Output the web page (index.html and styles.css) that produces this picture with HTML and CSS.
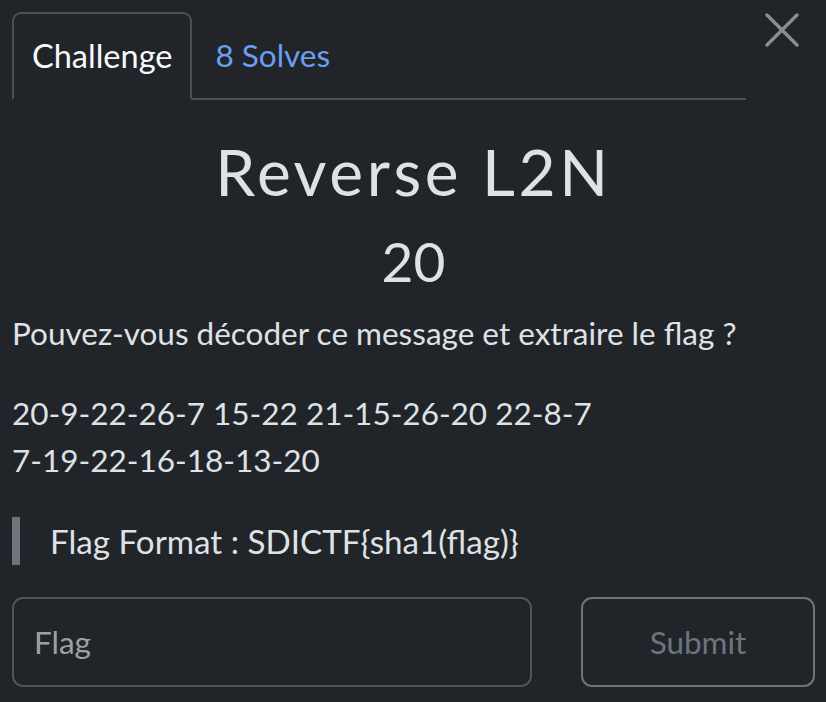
FILE: index.html
```html
<!DOCTYPE html>
<html lang="fr">
<head>
<meta charset="utf-8">
<title>Reverse L2N</title>
<link rel="stylesheet" href="styles.css">
</head>
<body>
<div class="modal">
  <div class="header">
    <ul class="tabs">
      <li class="tab active">Challenge</li>
      <li class="tab link">8 Solves</li>
    </ul>
    <button class="close" aria-label="Close">
      <svg width="34" height="34" viewBox="0 0 34 34"><path d="M2 2L32 32M32 2L2 32" stroke="#8b8d90" stroke-width="3.4" stroke-linecap="round"/></svg>
    </button>
  </div>
  <h3 class="title">Reverse L2N</h3>
  <h4 class="points">20</h4>
  <div class="desc">
    <p>Pouvez-vous décoder ce message et extraire le flag ?</p>
    <p>20-9-22-26-7 15-22 21-15-26-20 22-8-7<br>7-19-22-16-18-13-20</p>
    <blockquote>Flag Format : SDICTF{sha1(flag)}</blockquote>
  </div>
  <div class="form">
    <input class="flag" type="text" placeholder="Flag">
    <button class="submit">Submit</button>
  </div>
</div>
</body>
</html>
```
FILE: styles.css
```css
* { box-sizing: border-box; }
html, body { margin: 0; padding: 0; background: #212529; }
body {
  font-family: Lato, "Noto Sans", sans-serif;
  color: #dee2e6;
  font-size: 31.5px;
}
.modal { padding: 12px 11px 0 12px; }
.header { display: flex; align-items: flex-start; }
.tabs {
  list-style: none; margin: 0; padding: 0;
  display: flex; width: 734px; height: 88px;
  border-bottom: 2px solid #4b5057;
}
.tab {
  height: 88px; margin-bottom: -2px;
  padding: 0 18px 1px;
  border: 2px solid transparent;
  line-height: 83px;
  font-size: 32.5px;
}
.tab.active {
  color: #f8f9fa;
  border-color: #4b5057 #4b5057 #212529;
  border-radius: 9px 9px 0 0;
}
.tab.link { color: #6c9ef2; padding-left: 21px; font-size: 31.5px; }
.close {
  margin-left: auto; margin-top: 1px; margin-right: 16px;
  background: none; border: 0; padding: 0; width: 34px; height: 34px;
}
.close svg { display: block; }
.title {
  margin: 27px 0 0; text-align: center;
  font-size: 64px; font-weight: 400; letter-spacing: 3.6px;
  line-height: 90px; color: #dee2e6;
}
.points {
  margin: 0; text-align: center; font-size: 55px; font-weight: 400;
  line-height: 88px; color: #dee2e6;
}
.desc { margin-top: 4.5px; }
.desc p { margin: 0 0 34px; line-height: 46.5px; }
blockquote {
  margin: 0; padding-left: 30px; border-left: 8px solid #6c757d;
  line-height: 48px; font-size: 33.2px;
}
.form { display: flex; margin-top: 32px; }
.flag {
  width: 520px; height: 90px; border: 2px solid #4f545a; border-radius: 11px;
  background: #212529; color: #dee2e6; font: inherit; padding: 0 20px;
}
.flag::placeholder { color: #9da0a3; }
.submit {
  margin-left: 49px; width: 234px; height: 90px;
  border: 2px solid #6c757d; border-radius: 11px; background: #212529;
  color: #6c757d; font: inherit;
}
```
